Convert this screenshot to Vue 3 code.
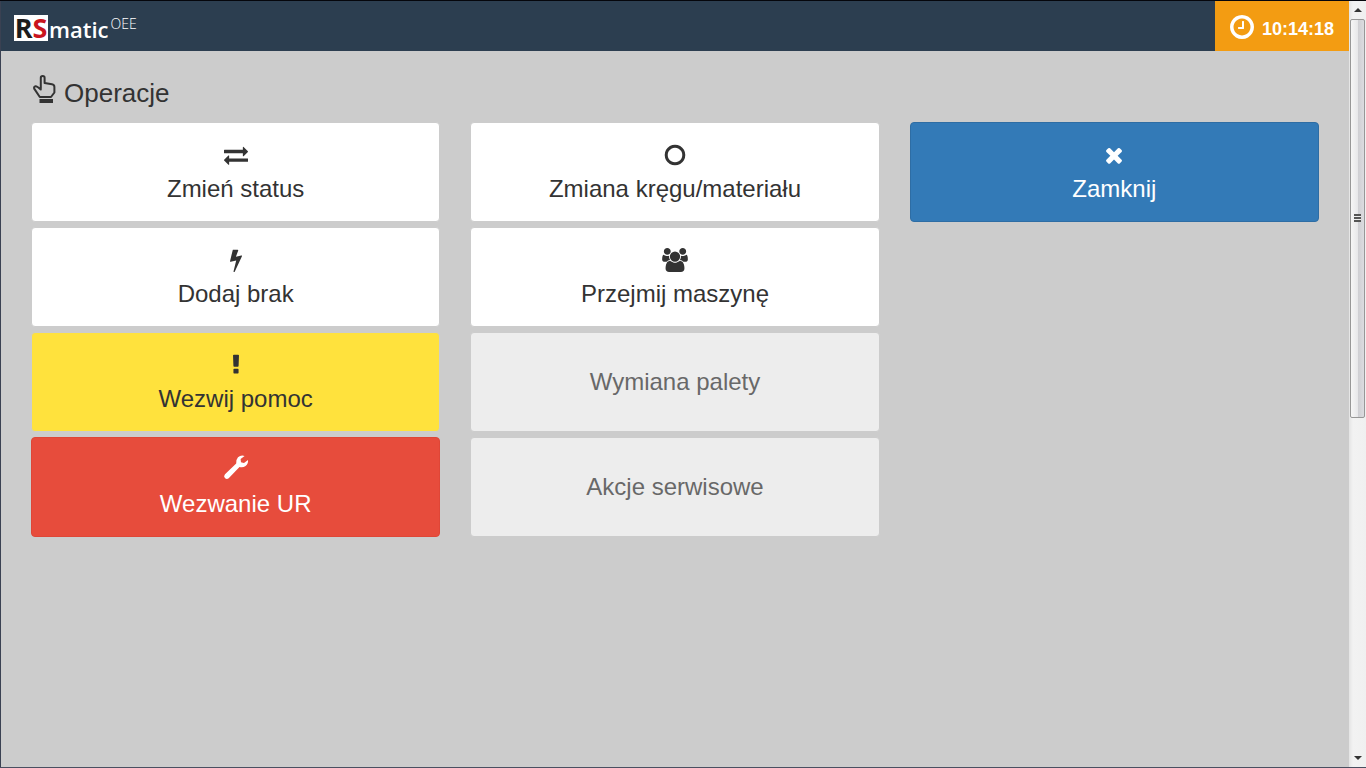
<template>
  <div class="screen">
    <div class="page">
      <header class="navbar">
        <a href="#" class="brand">
          <span class="brand-box"><span class="brand-r">R</span><span class="brand-s">S</span></span>
          <span class="brand-name">matic</span>
          <span class="brand-suffix">OEE</span>
        </a>
        <div class="clock">
          <svg class="clock-icon" viewBox="0 0 1792 1792" aria-hidden="true">
            <path :d="icons.clock.path" />
          </svg>
          <time>{{ time }}</time>
        </div>
      </header>

      <main class="content">
        <h1 class="title">
          <svg class="title-icon" viewBox="0 0 24 30" aria-hidden="true">
            <path
              class="hand"
              d="M8.800 15.500V4.800Q8.800 3 10.700 3T12.600 4.800V10L20 11.200Q22.400 11.600 22.400 14V19.500L19 24H7.800L2.200 15.600Q1.600 13.600 3.600 13.200Q5 13 8.800 16.500"
            />
            <path class="cuff" d="M7.500 26h13.500v4H7.500z" />
          </svg>
          <span>Operacje</span>
        </h1>

        <div class="row">
          <div v-for="(column, index) in columns" :key="index" class="column">
            <button
              v-for="item in column"
              :key="item.label"
              type="button"
              class="btn"
              :class="[item.type, { 'has-icon': item.icon }]"
              :disabled="item.disabled"
            >
              <svg
                v-if="item.icon"
                class="btn-icon"
                :viewBox="icons[item.icon].box"
                aria-hidden="true"
              >
                <path :d="icons[item.icon].path" />
              </svg>
              <span>{{ item.label }}</span>
            </button>
          </div>
        </div>
      </main>
    </div>

    <div class="scrollbar" aria-hidden="true">
      <span class="arrow arrow-up"></span>
      <div class="track">
        <div class="thumb">
          <span class="grip"></span>
        </div>
      </div>
      <span class="arrow arrow-down"></span>
    </div>
  </div>
</template>

<script setup>
import { ref } from 'vue';

const time = ref('10:14:18');

const columns = [
  [
    { label: 'Zmień status', icon: 'exchange', type: 'btn-default' },
    { label: 'Dodaj brak', icon: 'bolt', type: 'btn-default' },
    { label: 'Wezwij pomoc', icon: 'exclamation', type: 'btn-warning' },
    { label: 'Wezwanie UR', icon: 'wrench', type: 'btn-danger' }
  ],
  [
    { label: 'Zmiana kręgu/materiału', icon: 'circle', type: 'btn-default' },
    { label: 'Przejmij maszynę', icon: 'users', type: 'btn-default' },
    { label: 'Wymiana palety', type: 'btn-default', disabled: true },
    { label: 'Akcje serwisowe', type: 'btn-default', disabled: true }
  ],
  [
    { label: 'Zamknij', icon: 'times', type: 'btn-primary' }
  ]
];

const icons = {
  clock: {
    box: '0 0 1792 1792',
    path: 'M1024 544v448q0 14-9 23t-23 9h-320q-14 0-23-9t-9-23v-64q0-14 9-23t23-9h224v-352q0-14 9-23t23-9h64q14 0 23 9t9 23zm416 352q0-148-73-273t-198-198-273-73-273 73-198 198-73 273 73 273 198 198 273 73 273-73 198-198 73-273zm224 0q0 209-103 385.5t-279.5 279.5-385.5 103-385.5-103-279.5-279.5-103-385.5 103-385.5 279.5-279.5 385.5-103 385.5 103 279.5 279.5 103 385.5z'
  },
  exchange: {
    box: '0 0 1792 1792',
    path: 'M1792 1184v192q0 13-9.5 22.5t-22.5 9.5h-1376v192q0 13-9.5 22.5t-22.5 9.5q-12 0-24-10l-319-320q-9-9-9-22 0-14 9-23l320-320q9-9 23-9 13 0 22.5 9.5t9.5 22.5v192h1376q13 0 22.5 9.5t9.5 22.5zm0-544q0 14-9 23l-320 320q-9 9-23 9-13 0-22.5-9.5t-9.5-22.5v-192h-1376q-13 0-22.5-9.5t-9.5-22.5v-192q0-13 9.5-22.5t22.5-9.5h1376v-192q0-14 9-23t23-9q12 0 24 10l319 319q9 9 9 23z'
  },
  bolt: {
    box: '0 0 1792 1792',
    path: 'M1333 566q18 20 7 44l-540 1157q-13 25-42 25-4 0-14-2-17-5-25.5-19t-4.5-30l197-808-406 101q-4 1-12 1-18 0-31-11-18-15-13-39l201-825q4-14 16-23t28-9h328q19 0 32 12.5t13 29.5q0 8-5 18l-171 463 396-98q8-2 12-2 19 0 34 15z'
  },
  exclamation: {
    box: '0 0 1792 1792',
    path: 'M1088 1248v224q0 26-19 45t-45 19h-256q-26 0-45-19t-19-45v-224q0-26 19-45t45-19h256q26 0 45 19t19 45zm30-1056l-28 768q-1 26-20.5 45t-45.5 19h-256q-26 0-45.5-19t-20.5-45l-28-768q-1-26 17.5-45t44.5-19h320q26 0 44.5 19t17.5 45z'
  },
  wrench: {
    box: '0 3 24 24',
    path: 'M20.600 0.900L16.600 4.100L17 7.200L20 8.100L24 5Q24.500 8.700 21.600 11Q18.800 13 15.500 12L4.700 23.200Q2.800 24.800 0.900 23Q-0.800 21.200 1 19.300L12.200 8.600Q11.600 5 14 2.300Q17-0.600 20.600 0.900z'
  },
  circle: {
    box: '0 0 1792 1792',
    path: 'M896 352q-148 0-273 73t-198 198-73 273 73 273 198 198 273 73 273-73 198-198 73-273-73-273-198-198-273-73zm768 544q0 209-103 385.5t-279.5 279.5-385.5 103-385.5-103-279.5-279.5-103-385.5 103-385.5 279.5-279.5 385.5-103 385.5 103 279.5 279.5 103 385.5z'
  },
  users: {
    box: '0 0 1920 1792',
    path: 'M593 896q-162 5-265 128h-134q-82 0-138-40.5t-56-118.5q0-353 124-353 6 0 43.5 21t97.5 42.5 119 21.5q67 0 133-23-5 37-5 66 0 139 81 256zm1071 637q0 120-73 189.5t-194 69.5h-874q-121 0-194-69.5t-73-189.5q0-53 3.5-103.5t14-109 26.5-108.5 43-97.5 62-81 85.5-53.5 111.5-20q10 0 43 21.5t73 48 107 48 135 21.5 135-21.5 107-48 73-48 43-21.5q61 0 111.5 20t85.5 53.5 62 81 43 97.5 26.5 108.5 14 109 3.5 103.5zm-1024-1277q0 106-75 181t-181 75-181-75-75-181 75-181 181-75 181 75 75 181zm704 384q0 159-112.5 271.5t-271.5 112.5-271.5-112.5-112.5-271.5 112.5-271.5 271.5-112.5 271.5 112.5 112.5 271.5zm576 225q0 78-56 118.5t-138 40.5h-134q-103-123-265-128 81-117 81-256 0-29-5-66 66 23 133 23 59 0 119-21.5t97.5-42.5 43.5-21q124 0 124 353zm-128-609q0 106-75 181t-181 75-181-75-75-181 75-181 181-75 181 75 75 181z'
  },
  times: {
    box: '0 0 1792 1792',
    path: 'M1490 1322q0 40-28 68l-136 136q-28 28-68 28t-68-28l-294-294-294 294q-28 28-68 28t-68-28l-136-136q-28-28-28-68t28-68l294-294-294-294q-28-28-28-68t28-68l136-136q28-28 68-28t68 28l294 294 294-294q28-28 68-28t68 28l136 136q28 28 28 68t-28 68l-294 294 294 294q28 28 28 68z'
  }
};
</script>

<style>
body {
  margin: 0;
  background-color: #ccc;
}
</style>

<style scoped>
.screen {
  display: flex;
  box-sizing: border-box;
  min-height: 100vh;
  border-top: 1px solid #05060c;
  border-bottom: 1px solid #4a4f60;
  background-color: #ccc;
  color: #333;
  font-family: "Liberation Sans", Arial, sans-serif;
}

.page {
  flex: 1;
  min-width: 0;
  border-left: 1px solid #3a4152;
}

.navbar {
  display: flex;
  justify-content: space-between;
  height: 50px;
  background-color: #2c3e50;
  color: #fff;
}

.brand {
  display: flex;
  align-items: center;
  padding: 4px 13px 0;
  color: #fff;
  font-family: "Open Sans", sans-serif;
  text-decoration: none;
}

.brand-box {
  display: flex;
  align-items: center;
  justify-content: center;
  width: 34px;
  height: 26px;
  background-color: #fff;
  font-size: 27px;
  font-weight: 700;
  line-height: 26px;
}

.brand-r {
  color: #1c1c1c;
}

.brand-s {
  color: #c9151e;
}

.brand-name {
  padding: 2px 0 0 1px;
  font-size: 22px;
  font-weight: 600;
  line-height: 26px;
}

.brand-suffix {
  align-self: flex-start;
  padding: 9px 0 0 2px;
  font-size: 14px;
  font-weight: 300;
  line-height: 20px;
}

.clock {
  display: flex;
  align-items: center;
  gap: 6px;
  padding: 2px 15px 0 13px;
  background-color: #f39c12;
  font-size: 18px;
  font-weight: bold;
}

.clock-icon {
  width: 28px;
  height: 28px;
  fill: currentColor;
}

.clock time {
  padding-top: 4px;
}

.content {
  padding: 22px 15px 15px;
}

.title {
  display: flex;
  align-items: flex-start;
  gap: 8px;
  height: 49px;
  margin: 0;
  padding-left: 16px;
  font-size: 26px;
  font-weight: normal;
  line-height: 40px;
}

.title-icon {
  width: 24px;
  height: 30px;
}

.hand {
  fill: none;
  stroke: #333;
  stroke-width: 2;
  stroke-linejoin: round;
  stroke-linecap: round;
}

.cuff {
  fill: #333;
}

.row {
  display: grid;
  grid-template-columns: repeat(3, 1fr);
}

.column {
  display: flex;
  flex-direction: column;
  gap: 5px;
  padding: 0 15px;
}

.btn {
  display: flex;
  flex-direction: column;
  align-items: center;
  justify-content: center;
  gap: 5px;
  height: 100px;
  padding: 0 12px;
  border: 1px solid #ccc;
  border-radius: 4px;
  color: #333;
  font-family: inherit;
  font-size: 24px;
  line-height: 34px;
  cursor: pointer;
}

.has-icon {
  padding-top: 5px;
}

.btn-icon {
  width: 26px;
  height: 24px;
  overflow: visible;
  fill: currentColor;
}

.btn-default {
  background-color: #fff;
}

.btn-warning {
  background-color: #ffe23d;
}

.btn-danger {
  border-color: #df4637;
  background-color: #e74c3c;
  color: #fff;
}

.btn-primary {
  border-color: #2e6da4;
  background-color: #337ab7;
  color: #fff;
}

.btn:disabled {
  opacity: 0.65;
  cursor: not-allowed;
}

.scrollbar {
  display: flex;
  flex-direction: column;
  width: 17px;
  background: linear-gradient(to right, #e4e4e4, #f2f2f2 4px, #f0f0f0);
}

.arrow {
  display: flex;
  align-items: center;
  justify-content: center;
  height: 18px;
}

.arrow::before {
  content: "";
  border: 4px solid transparent;
}

.arrow-up::before {
  border-top-width: 0;
  border-bottom-color: #333;
}

.arrow-down::before {
  border-bottom-width: 0;
  border-top-color: #333;
}

.track {
  flex: 1;
  padding: 0 1px;
}

.thumb {
  display: flex;
  align-items: center;
  justify-content: center;
  box-sizing: border-box;
  height: 54.6%;
  border: 1px solid #979797;
  border-radius: 2px;
  background: linear-gradient(to right, #f6f6f6, #e8e8ea 50%, #cfcfd3 55%, #dcdce0);
}

.grip {
  width: 7px;
  height: 8px;
  background: repeating-linear-gradient(#555 0 2px, #eee 2px 3px);
}
</style>
